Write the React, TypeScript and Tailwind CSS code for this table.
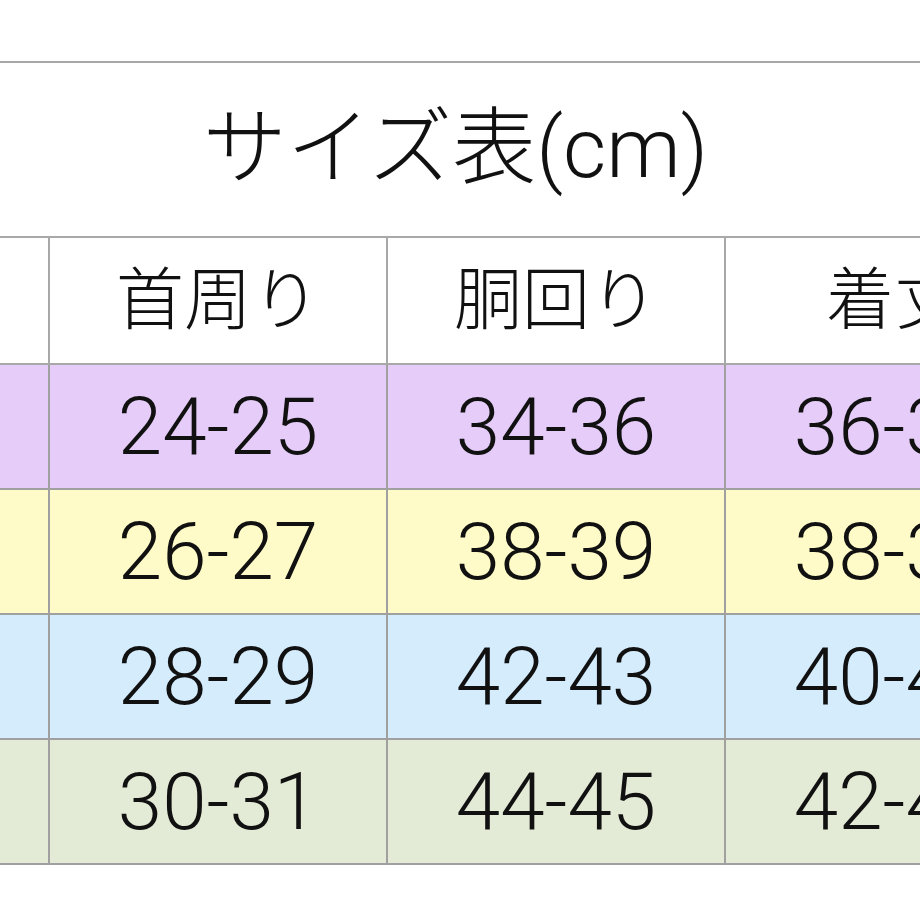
import React from "react";

const rows = [
  { bg: "bg-[#e6ccf9]", v: ["24-25", "34-36", "36-38"] },
  { bg: "bg-[#fffbc8]", v: ["26-27", "38-39", "38-39"] },
  { bg: "bg-[#d5ecfc]", v: ["28-29", "42-43", "40-41"] },
  { bg: "bg-[#e3ead5]", v: ["30-31", "44-45", "42-43"] },
];

const font = { fontFamily: 'Roboto, "Noto Sans CJK JP", sans-serif' };

export default function App() {
  return (
    <div className="w-[920px] h-[920px] overflow-hidden bg-white text-[#111] font-light" style={font}>
      <div className="w-[1100px] pt-[61px]">
        <div className="h-[177px] border-t-2 border-b-2 border-[#a8a8a8] flex items-center">
          <div className="w-[911px] text-center text-[84px] leading-none pb-[2px]">サイズ表(cm)</div>
        </div>
        <div className="flex h-[127px] border-b-2 border-[#a8a8a8] bg-white">
          <div className="w-[50px] border-r-2 border-[#a8a8a8]" />
          {["首周り", "胴回り", "着丈"].map((h) => (
            <div key={h} className="w-[338px] border-r-2 border-[#a8a8a8] flex items-center justify-center text-[68px] leading-none">
              {h}
            </div>
          ))}
        </div>
        {rows.map((r, i) => (
          <div key={i} className={`flex h-[125px] border-b-2 border-[#a0a0a0] ${r.bg}`}>
            <div className="w-[50px] border-r-2 border-[#a0a0a0]" />
            {r.v.map((t, j) => (
              <div key={j} className="w-[338px] border-r-2 border-[#a0a0a0] flex items-center justify-center text-[80px] leading-none">
                {t}
              </div>
            ))}
          </div>
        ))}
      </div>
    </div>
  );
}
